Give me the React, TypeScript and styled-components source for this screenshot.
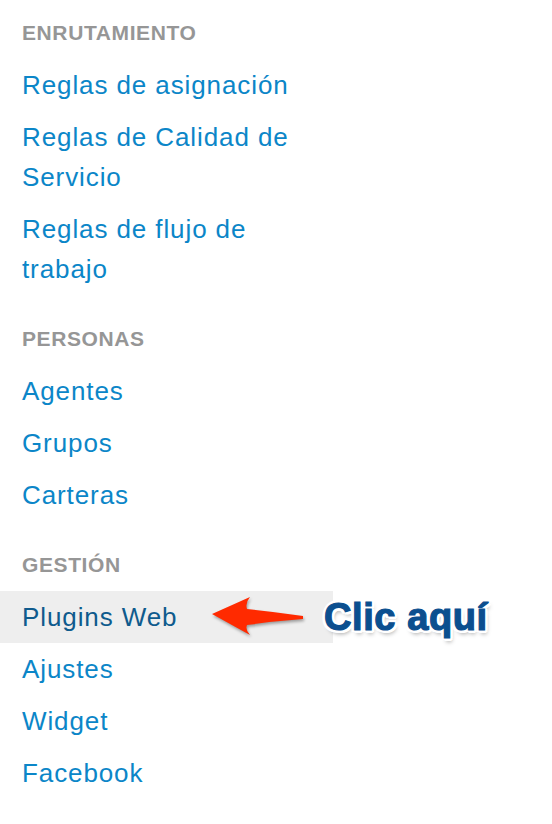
import React from "react";
import styled, { createGlobalStyle } from "styled-components";

const GlobalStyle = createGlobalStyle`
  body {
    margin: 0;
    background: #ffffff;
    font-family: "Liberation Sans", Arial, sans-serif;
  }
`;

const StyledSidebar = styled.nav`
  width: 333px;
  padding-top: 23px;
  padding-bottom: 30px;
`;

const StyledHeading = styled.h3`
  margin: 34px 0 16px;
  padding-left: 22px;
  font-size: 21px;
  line-height: 20px;
  font-weight: bold;
  letter-spacing: 0.6px;
  color: #969696;

  &:first-child {
    margin-top: 0;
  }
`;

const StyledList = styled.ul`
  list-style: none;
  margin: 0;
  padding: 0;
`;

const StyledItem = styled.li<{ $active?: boolean }>`
  position: relative;
  padding: 6px 0 6px 22px;
  background: ${(p) => (p.$active ? "#eeeeee" : "transparent")};
`;

const StyledLink = styled.a<{ $active?: boolean }>`
  display: block;
  max-width: 300px;
  font-size: 26px;
  line-height: 40px;
  letter-spacing: 0.9px;
  color: ${(p) => (p.$active ? "#0f5b8d" : "#0b86c8")};
  text-decoration: none;
`;

const StyledArrow = styled.svg`
  position: absolute;
  left: 190px;
  top: 0;
  overflow: visible;
  filter: drop-shadow(1px 2px 1.5px rgba(0, 0, 0, 0.35));
`;

const StyledCallout = styled.span`
  position: absolute;
  left: 324px;
  top: 5px;
  font-size: 38px;
  line-height: 42px;
  font-weight: bold;
  letter-spacing: 0.6px;
  white-space: nowrap;
  color: #0b4f8f;
  -webkit-text-stroke: 1.2px #0b4f8f;
  text-shadow:
    3px 0 0 #fff, -3px 0 0 #fff, 0 3px 0 #fff, 0 -3px 0 #fff,
    2px 2px 0 #fff, -2px -2px 0 #fff, 2px -2px 0 #fff, -2px 2px 0 #fff,
    3px 2px 0 #fff, -3px 2px 0 #fff, 2px 3px 0 #fff, 2px -3px 0 #fff,
    2px 4px 4px rgba(0, 0, 0, 0.35);
`;

type Section = {
  title: string;
  links: string[];
};

const sections: Section[] = [
  {
    title: "ENRUTAMIENTO",
    links: [
      "Reglas de asignación",
      "Reglas de Calidad de Servicio",
      "Reglas de flujo de trabajo",
    ],
  },
  { title: "PERSONAS", links: ["Agentes", "Grupos", "Carteras"] },
  {
    title: "GESTIÓN",
    links: ["Plugins Web", "Ajustes", "Widget", "Facebook"],
  },
];

const ACTIVE = "Plugins Web";

const Arrow: React.FC = () => (
  <StyledArrow width="125" height="52" viewBox="0 0 125 52">
    <path
      d="M22 23 L60 6 Q55 12 57 18 Q85 21 113 25 L113 28 Q85 30 57 34 Q55 39 60 44 Z"
      fill="#ff2a00"
    />
  </StyledArrow>
);

const App: React.FC = () => {
  return (
    <>
      <GlobalStyle />
      <StyledSidebar>
        {sections.map((section) => (
          <React.Fragment key={section.title}>
            <StyledHeading>{section.title}</StyledHeading>
            <StyledList>
              {section.links.map((link) => {
                const active = link === ACTIVE;
                return (
                  <StyledItem key={link} $active={active}>
                    <StyledLink href="#" $active={active}>
                      {link}
                    </StyledLink>
                    {active && (
                      <>
                        <Arrow />
                        <StyledCallout>Clic aquí</StyledCallout>
                      </>
                    )}
                  </StyledItem>
                );
              })}
            </StyledList>
          </React.Fragment>
        ))}
      </StyledSidebar>
    </>
  );
};

export default App;
